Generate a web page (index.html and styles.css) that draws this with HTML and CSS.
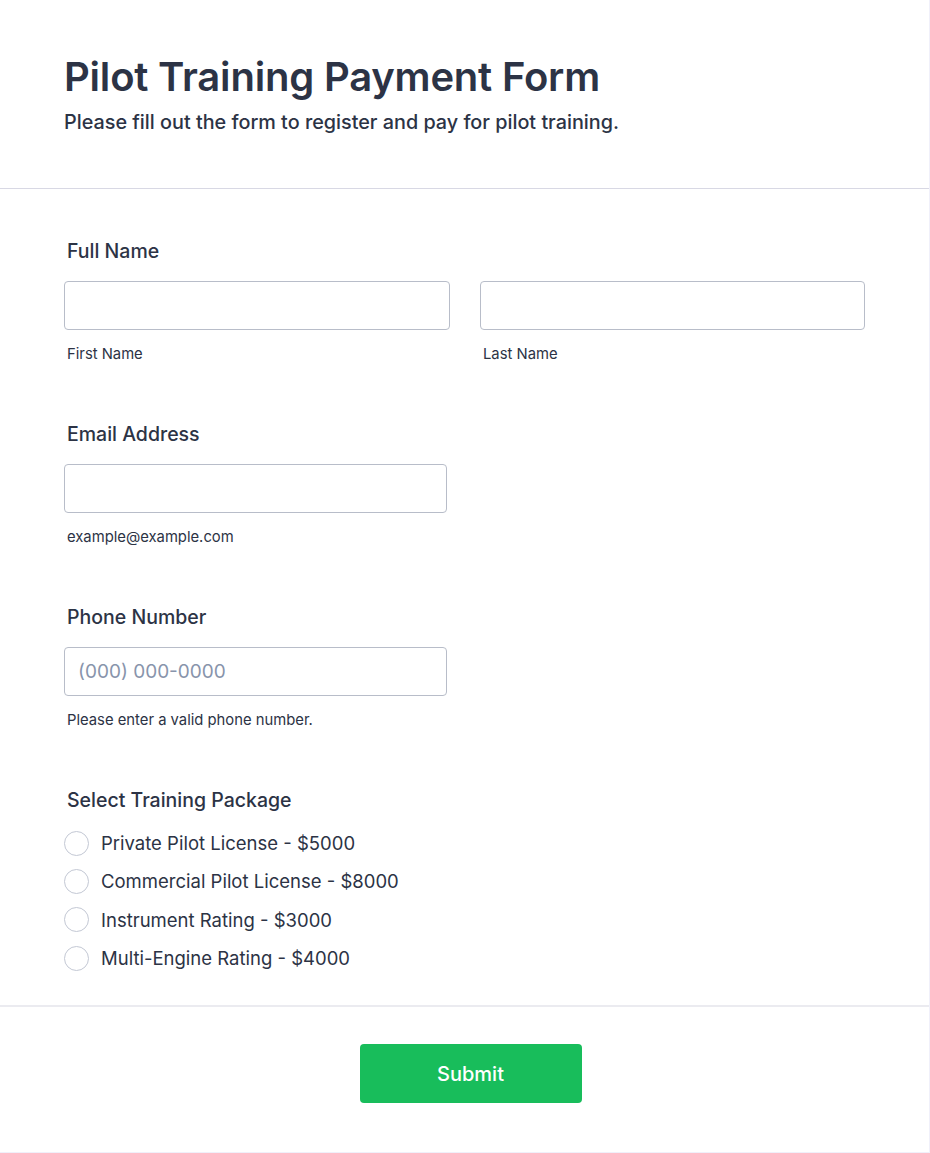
FILE: index.html
```html
<!DOCTYPE html>
<html lang="en">
<head>
<meta charset="utf-8">
<title>Pilot Training Payment Form</title>
<link rel="stylesheet" href="styles.css">
</head>
<body>
<div class="card">
  <header class="form-header">
    <h1 class="title">Pilot Training Payment Form</h1>
    <p class="subtitle">Please fill out the form to register and pay for pilot training.</p>
  </header>
  <form class="form-body">
    <div class="field">
      <div class="label">Full Name</div>
      <div class="name-grid">
        <div class="col">
          <input class="input" type="text">
          <div class="sublabel">First Name</div>
        </div>
        <div class="col">
          <input class="input" type="text">
          <div class="sublabel">Last Name</div>
        </div>
      </div>
    </div>
    <div class="field">
      <div class="label">Email Address</div>
      <input class="input single" type="email">
      <div class="sublabel">example@example.com</div>
    </div>
    <div class="field">
      <div class="label">Phone Number</div>
      <input class="input single" type="tel" placeholder="(000) 000-0000">
      <div class="sublabel">Please enter a valid phone number.</div>
    </div>
    <div class="field radio-field">
      <div class="label">Select Training Package</div>
      <div class="options">
        <label class="option"><span class="radio"></span><span>Private Pilot License - $5000</span></label>
        <label class="option"><span class="radio"></span><span>Commercial Pilot License - $8000</span></label>
        <label class="option"><span class="radio"></span><span>Instrument Rating - $3000</span></label>
        <label class="option"><span class="radio"></span><span>Multi-Engine Rating - $4000</span></label>
      </div>
    </div>
  </form>
  <div class="form-footer">
    <button class="submit" type="button">Submit</button>
  </div>
</div>
</body>
</html>
```
FILE: styles.css
```css
* { box-sizing: border-box; }
html, body { margin: 0; padding: 0; }
body {
  background: #f3f3fe;
  font-family: Inter, "Noto Sans", sans-serif;
  color: #2c3345;
}
.card {
  width: 930px;
  height: 1153px;
  background: #fff;
  border-right: 1px solid #f0f0fa;
  border-bottom: 1px solid #f0f0fa;
}
.form-header {
  padding: 53px 64px 52px;
  border-bottom: 1px solid #d8d8e4;
}
.title {
  margin: 0;
  font-size: 40px;
  line-height: 48px;
  font-weight: 600;
  letter-spacing: -0.2px;
}
.subtitle {
  margin: 8px 0 0;
  font-size: 19.8px;
  line-height: 27px;
  font-weight: 500;
}
.form-body {
  padding: 49px 64px 28px;
  display: flex;
  flex-direction: column;
  gap: 57px;
  border-bottom: 2px solid #ebebf0;
}
.field { display: flex; flex-direction: column; }
.label {
  font-size: 19.5px;
  line-height: 27px;
  font-weight: 500;
  padding-left: 3px;
  margin-bottom: 16px;
}
.name-grid {
  display: grid;
  grid-template-columns: 386px 385px;
  gap: 30px;
}
.col { display: flex; flex-direction: column; }
.input {
  height: 49px;
  border: 1px solid #b8bdc9;
  border-radius: 4px;
  background: #fff;
  font-family: inherit;
  font-size: 19px;
  padding: 0 13px;
  color: #2c3345;
}
.input::placeholder { color: #8894ab; }
.single { width: 383px; }
.sublabel {
  margin-top: 14px;
  padding-left: 3px;
  font-size: 14.8px;
  line-height: 20px;
}
.radio-field .label { margin-bottom: 10px; }
.options { display: flex; flex-direction: column; }
.option {
  display: flex;
  align-items: center;
  gap: 12px;
  height: 38.3px;
  font-size: 18.5px;
}
.radio {
  width: 25px;
  height: 25px;
  border: 1.5px solid #c3c8d4;
  border-radius: 50%;
  flex: none;
}
.form-footer {
  display: flex;
  justify-content: center;
  padding: 37px 0 0 12px;
}
.submit {
  width: 222px;
  height: 59px;
  border: none;
  border-radius: 4px;
  background: #18bd5b;
  color: #fff;
  font-family: inherit;
  font-size: 20px;
  font-weight: 500;
}
```
